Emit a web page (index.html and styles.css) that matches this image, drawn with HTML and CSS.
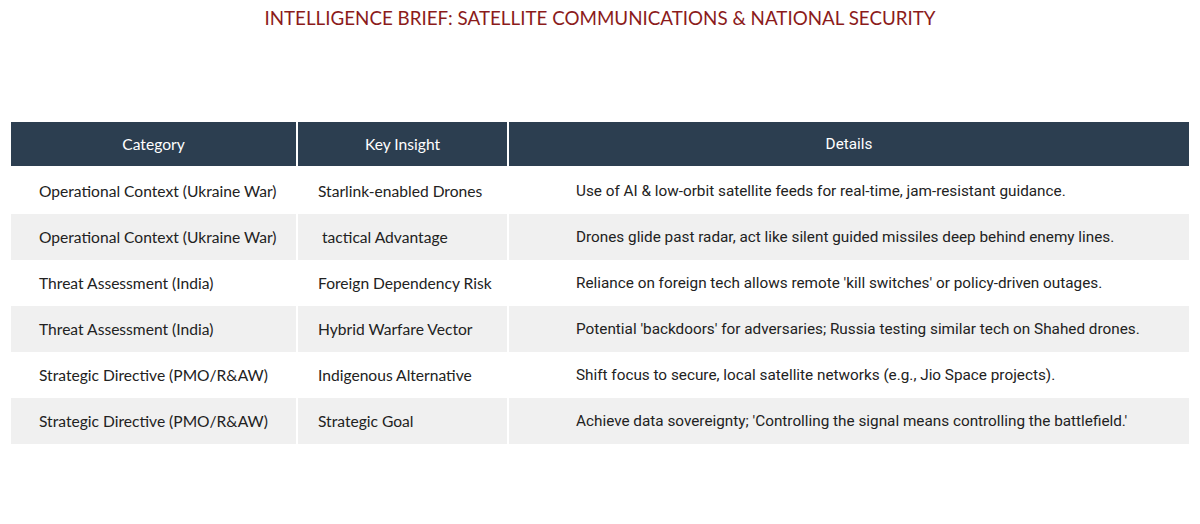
FILE: index.html
```html
<!DOCTYPE html>
<html lang="en">
<head>
<meta charset="utf-8">
<title>Intelligence Brief</title>
<link rel="stylesheet" href="styles.css">
</head>
<body>
<h1 class="title">INTELLIGENCE BRIEF: SATELLITE COMMUNICATIONS &amp; NATIONAL SECURITY</h1>
<div class="brief">
  <div class="cell head c1">Category</div>
  <div class="cell head c2">Key Insight</div>
  <div class="cell head c3">Details</div>

  <div class="cell c1">Operational Context (Ukraine War)</div>
  <div class="cell c2">Starlink-enabled Drones</div>
  <div class="cell c3">Use of AI &amp; low-orbit satellite feeds for real-time, jam-resistant guidance.</div>

  <div class="cell alt c1">Operational Context (Ukraine War)</div>
  <div class="cell alt c2">&nbsp;tactical Advantage</div>
  <div class="cell alt c3">Drones glide past radar, act like silent guided missiles deep behind enemy lines.</div>

  <div class="cell c1">Threat Assessment (India)</div>
  <div class="cell c2">Foreign Dependency Risk</div>
  <div class="cell c3">Reliance on foreign tech allows remote 'kill switches' or policy-driven outages.</div>

  <div class="cell alt c1">Threat Assessment (India)</div>
  <div class="cell alt c2">Hybrid Warfare Vector</div>
  <div class="cell alt c3">Potential 'backdoors' for adversaries; Russia testing similar tech on Shahed drones.</div>

  <div class="cell c1">Strategic Directive (PMO/R&amp;AW)</div>
  <div class="cell c2">Indigenous Alternative</div>
  <div class="cell c3">Shift focus to secure, local satellite networks (e.g., Jio Space projects).</div>

  <div class="cell alt c1">Strategic Directive (PMO/R&amp;AW)</div>
  <div class="cell alt c2">Strategic Goal</div>
  <div class="cell alt c3">Achieve data sovereignty; 'Controlling the signal means controlling the battlefield.'</div>
</div>
</body>
</html>
```

FILE: styles.css
```css
html, body {
  margin: 0;
  padding: 0;
  background: #ffffff;
}

body {
  font-family: "Lato", "Liberation Sans", sans-serif;
  color: #222222;
}

.title {
  margin: 0;
  padding-top: 5px;
  font-family: "Lato", "Liberation Sans", sans-serif;
  font-weight: 400;
  font-size: 18.8px;
  line-height: 26px;
  color: #8b1b1b;
  text-align: center;
}

.brief {
  display: grid;
  grid-template-columns: 285px 209px 1fr;
  column-gap: 2px;
  margin: 91px 11px 0;
}

.cell {
  height: 46px;
  display: flex;
  align-items: center;
  font-size: 15.6px;
  white-space: nowrap;
}

.cell.c1 {
  padding-left: 28px;
}

.cell.c2 {
  padding-left: 20px;
}

.cell.c3 {
  padding-left: 67px;
  font-family: "Roboto", "Liberation Sans", sans-serif;
  font-size: 15.3px;
}

.cell.alt {
  background: #f0f0f0;
}

.cell.head {
  height: 44px;
  margin-bottom: 2px;
  padding-left: 0;
  justify-content: center;
  background: #2c3e50;
  color: #ffffff;
}
```
